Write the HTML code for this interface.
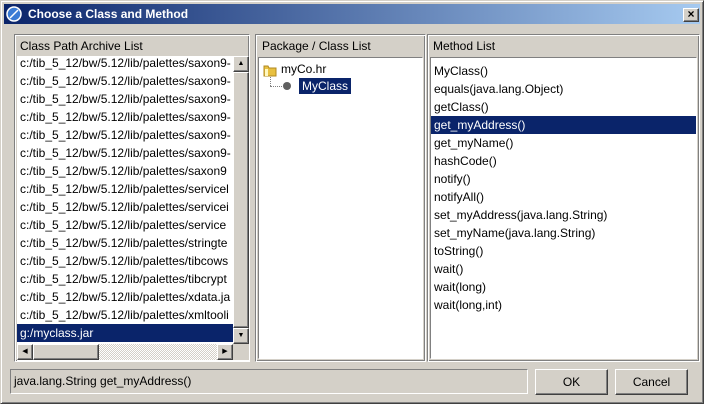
<!DOCTYPE html>
<html><head><style>
*{margin:0;padding:0;box-sizing:border-box}
body{width:705px;height:409px;background:#fff;font-family:"Liberation Sans",sans-serif;font-size:12px;color:#000;position:relative;overflow:hidden}
.abs{position:absolute}
.dlg{left:0;top:0;width:704px;height:404px;background:#d4d0c8;border:1px solid;border-color:#d4d0c8 #404040 #404040 #d4d0c8;box-shadow:inset 1px 1px #fff,inset -1px -1px #808080}
.title{left:4px;top:4px;width:696px;height:20px;background:linear-gradient(90deg,#0a246a,#a6caf0);color:#fff;font-weight:bold;font-size:12px;line-height:20px;padding-left:24px}
.panel{border:1px solid;border-color:#808080 #fff #fff #808080;box-shadow:inset 1px 1px #fff,inset -1px -1px #808080}
.hdr{font-size:12px}
.list{background:#fff;border:1px solid;border-color:#808080 #fff #fff #808080;overflow:hidden}
.row{height:18px;line-height:18px;padding-left:3px;white-space:nowrap}
.sel{background:#0a246a;color:#fff}
.btn{background:#d4d0c8;border:1px solid;border-color:#fff #404040 #404040 #fff;box-shadow:inset -1px -1px #808080;text-align:center;line-height:24px}
.sb{background:#d4d0c8;border:1px solid;border-color:#fff #404040 #404040 #fff;box-shadow:inset -1px -1px #808080}
.track{background:repeating-conic-gradient(#fff 0 25%,#d4d0c8 0 50%) 0 0/2px 2px}
</style></head><body>
<div class="abs dlg"></div>
<div class="abs title">Choose a Class and Method</div>
<svg class="abs" style="left:6px;top:6px" width="16" height="16"><circle cx="8" cy="8" r="7" fill="#3a7bd5" stroke="#fff" stroke-width="1.5"/><path d="M4 12 L12 4" stroke="#fff" stroke-width="1.5"/></svg>
<div class="abs btn" style="left:683px;top:8px;width:16px;height:14px;line-height:11px;font-size:12px;font-weight:bold">×</div>

<!-- left panel -->
<div class="abs panel" style="left:14px;top:34px;width:236px;height:328px"></div>
<div class="abs hdr" style="left:20px;top:39px">Class Path Archive List</div>
<div class="abs list" style="left:17px;top:56px;width:232px;height:305px;border:none">
<div style="position:absolute;left:0;top:-2px;width:216px">
<div class="row" style="padding-left:3px">c:/tib_5_12/bw/5.12/lib/palettes/saxon9-</div>
<div class="row">c:/tib_5_12/bw/5.12/lib/palettes/saxon9-</div>
<div class="row">c:/tib_5_12/bw/5.12/lib/palettes/saxon9-</div>
<div class="row">c:/tib_5_12/bw/5.12/lib/palettes/saxon9-</div>
<div class="row">c:/tib_5_12/bw/5.12/lib/palettes/saxon9-</div>
<div class="row">c:/tib_5_12/bw/5.12/lib/palettes/saxon9-</div>
<div class="row">c:/tib_5_12/bw/5.12/lib/palettes/saxon9</div>
<div class="row">c:/tib_5_12/bw/5.12/lib/palettes/servicel</div>
<div class="row">c:/tib_5_12/bw/5.12/lib/palettes/servicei</div>
<div class="row">c:/tib_5_12/bw/5.12/lib/palettes/service</div>
<div class="row">c:/tib_5_12/bw/5.12/lib/palettes/stringte</div>
<div class="row">c:/tib_5_12/bw/5.12/lib/palettes/tibcows</div>
<div class="row">c:/tib_5_12/bw/5.12/lib/palettes/tibcrypt</div>
<div class="row">c:/tib_5_12/bw/5.12/lib/palettes/xdata.ja</div>
<div class="row">c:/tib_5_12/bw/5.12/lib/palettes/xmltooli</div>
<div class="row sel">g:/myclass.jar</div>
</div>
<div class="abs track" style="left:216px;top:0;width:16px;height:288px"></div>
<div class="abs sb" style="left:216px;top:0;width:16px;height:16px;font-size:7px;text-align:center;line-height:14px">▲</div>
<div class="abs sb" style="left:216px;top:16px;width:16px;height:256px"></div>
<div class="abs sb" style="left:216px;top:272px;width:16px;height:16px;font-size:7px;text-align:center;line-height:14px">▼</div>
<div class="abs track" style="left:0;top:288px;width:216px;height:16px"></div>
<div class="abs sb" style="left:0;top:288px;width:16px;height:16px;font-size:7px;text-align:center;line-height:14px">◀</div>
<div class="abs sb" style="left:16px;top:288px;width:66px;height:16px"></div>
<div class="abs sb" style="left:200px;top:288px;width:16px;height:16px;font-size:7px;text-align:center;line-height:14px">▶</div>
<div class="abs" style="left:216px;top:288px;width:16px;height:16px;background:#d4d0c8"></div>
</div>

<!-- middle panel -->
<div class="abs panel" style="left:255px;top:34px;width:171px;height:328px"></div>
<div class="abs hdr" style="left:262px;top:39px">Package / Class List</div>
<div class="abs list" style="left:258px;top:57px;width:165px;height:302px">
<svg class="abs" style="left:4px;top:5px" width="14" height="14"><path d="M1 3h4l1 2h7v8H1z" fill="#e8c040" stroke="#b08820"/><rect x="2" y="6" width="3" height="7" fill="#fff8c0"/></svg>
<div class="abs" style="left:22px;top:4px">myCo.hr</div>
<div class="abs" style="left:11px;top:19px;width:1px;height:9px;border-left:1px dotted #808080"></div>
<div class="abs" style="left:11px;top:28px;width:12px;border-top:1px dotted #808080"></div>
<div class="abs" style="left:24px;top:24px;width:8px;height:8px;border-radius:50%;background:#606060"></div>
<div class="abs sel" style="left:40px;top:20px;padding:0 3px;height:16px;line-height:16px">MyClass</div>
</div>

<!-- right panel -->
<div class="abs panel" style="left:427px;top:34px;width:273px;height:328px"></div>
<div class="abs hdr" style="left:433px;top:39px">Method List</div>
<div class="abs list" style="left:430px;top:57px;width:267px;height:302px">
<div style="position:absolute;left:0;top:4px;width:265px">
<div class="row">MyClass()</div>
<div class="row">equals(java.lang.Object)</div>
<div class="row">getClass()</div>
<div class="row sel">get_myAddress()</div>
<div class="row">get_myName()</div>
<div class="row">hashCode()</div>
<div class="row">notify()</div>
<div class="row">notifyAll()</div>
<div class="row">set_myAddress(java.lang.String)</div>
<div class="row">set_myName(java.lang.String)</div>
<div class="row">toString()</div>
<div class="row">wait()</div>
<div class="row">wait(long)</div>
<div class="row">wait(long,int)</div>
</div>
</div>

<!-- bottom -->
<div class="abs" style="left:10px;top:369px;width:518px;height:25px;border:1px solid;border-color:#808080 #fff #fff #808080;line-height:23px;padding-left:3px">java.lang.String get_myAddress()</div>
<div class="abs btn" style="left:535px;top:369px;width:73px;height:26px">OK</div>
<div class="abs btn" style="left:615px;top:369px;width:73px;height:26px">Cancel</div>
</body></html>
